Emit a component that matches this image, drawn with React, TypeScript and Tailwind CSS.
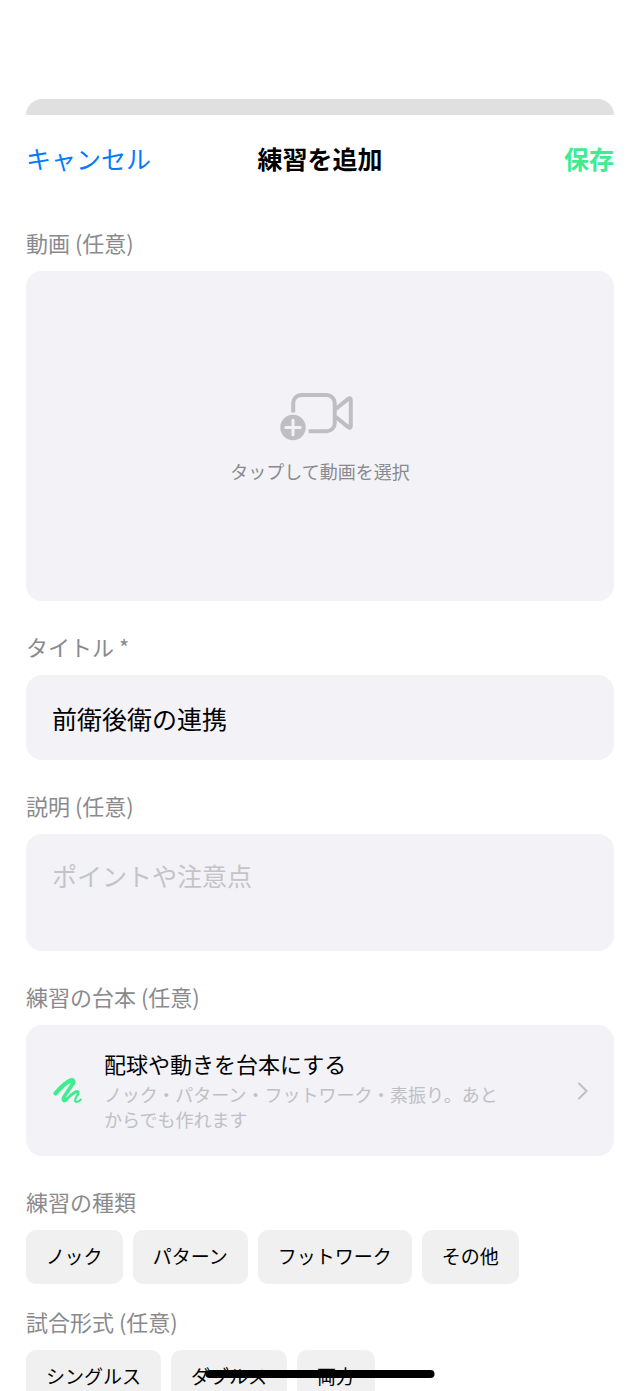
import type { ReactNode } from "react";

const practiceTypes = ["ノック", "パターン", "フットワーク", "その他"];
const matchFormats = ["シングルス", "ダブルス", "両方"];

export default function App() {
  return (
    <div className="relative flex h-screen flex-col overflow-hidden bg-white pt-[99px] font-['Noto_Sans_CJK_JP',sans-serif] text-black">
      <div className="mx-[26px] h-4 shrink-0 rounded-t-2xl bg-[#e0e0e0]" />

      <main className="px-[26px]">
        <header className="grid grid-cols-3 items-center pt-6 pb-7 text-[25px] leading-[38px]">
          <button className="justify-self-start text-[#007aff]">キャンセル</button>
          <h1 className="justify-self-center font-bold">練習を追加</h1>
          <button className="justify-self-end font-bold text-[#3ded8f]">保存</button>
        </header>

        <form className="mt-6 space-y-8">
          <Field label="動画 (任意)">
            <button
              type="button"
              className="flex h-[330px] w-full flex-col items-center justify-center gap-5 rounded-2xl bg-[#f2f2f7]"
            >
              <VideoAddIcon />
              <span className="text-[18px] leading-5 text-[#8a8a8e]">タップして動画を選択</span>
            </button>
          </Field>

          <Field label="タイトル *" htmlFor="title">
            <input
              id="title"
              defaultValue="前衛後衛の連携"
              className="block h-[85px] w-full rounded-2xl bg-[#f2f2f7] px-[26px] text-[25px] outline-none"
            />
          </Field>

          <Field label="説明 (任意)" htmlFor="description">
            <textarea
              id="description"
              placeholder="ポイントや注意点"
              className="block h-[117px] w-full resize-none rounded-2xl bg-[#f2f2f7] px-[26px] py-[22px] text-[25px] leading-[38px] outline-none placeholder:text-[#c4c4c7]"
            />
          </Field>

          <Field label="練習の台本 (任意)">
            <button
              type="button"
              className="flex w-full items-center rounded-2xl bg-[#f2f2f7] px-[26px] py-6 text-left"
            >
              <ScribbleIcon />
              <span className="ml-[22px] flex-1">
                <span className="mb-[5px] block text-[22px] leading-[28px]">配球や動きを台本にする</span>
                <span className="block text-[18px] leading-[25px] text-[#c0c0c4]">
                  ノック・パターン・フットワーク・素振り。あと
                  <br />
                  からでも作れます
                </span>
              </span>
              <ChevronIcon />
            </button>
          </Field>

          <div className="space-y-6">
            <Field label="練習の種類">
              <ChipRow items={practiceTypes} />
            </Field>
            <Field label="試合形式 (任意)">
              <ChipRow items={matchFormats} />
            </Field>
          </div>
        </form>
      </main>

      <div className="absolute bottom-[13px] left-1/2 h-2 w-[229px] -translate-x-1/2 rounded-full bg-black" />
    </div>
  );
}

function Field({ label, htmlFor, children }: { label: string; htmlFor?: string; children: ReactNode }) {
  const labelClass = "mb-4 block text-[22px] leading-[26px] text-[#8a8a8e]";

  return (
    <div>
      {htmlFor ? (
        <label htmlFor={htmlFor} className={labelClass}>
          {label}
        </label>
      ) : (
        <p className={labelClass}>{label}</p>
      )}
      {children}
    </div>
  );
}

function ChipRow({ items }: { items: string[] }) {
  return (
    <div className="flex gap-[10px]">
      {items.map((item) => (
        <button
          key={item}
          type="button"
          className="rounded-[10px] bg-[#f0f0f0] px-5 pt-[11px] pb-[13px] text-[19px] leading-[30px] whitespace-nowrap"
        >
          {item}
        </button>
      ))}
    </div>
  );
}

function VideoAddIcon() {
  return (
    <svg width="80" height="50" viewBox="0 0 80 50" fill="none" aria-hidden="true">
      <g stroke="#bebec3" strokeWidth="4">
        <path d="M13.2 21.5V12a8 8 0 0 1 8-8H46.7a8 8 0 0 1 8 8V32.2a8 8 0 0 1-8 8H28.6" />
        <path d="M55.5 18.3 68.2 7.9Q70.8 6.2 70.8 9.2V34.8Q70.8 37.8 68.2 36.1L55.5 25.7" strokeLinejoin="round" />
      </g>
      <circle cx="13" cy="36.5" r="12.7" fill="#bebec3" />
      <path d="M13 29.3v14.4M5.8 36.5h14.4" stroke="#f2f2f7" strokeWidth="3" strokeLinecap="round" />
    </svg>
  );
}

function ScribbleIcon() {
  return (
    <svg
      width="30"
      height="28"
      viewBox="-1 0 30 28"
      fill="none"
      stroke="#3ded8f"
      strokeLinecap="round"
      strokeLinejoin="round"
      aria-hidden="true"
    >
      <path d="M2.6 16.4C7.5 10.8 13 5.6 17.4 3.6C20 2.7 21 4.2 19.8 6.4" strokeWidth="4.4" />
      <path d="M19.8 6.4C17.6 11 12.8 16.4 10.8 20.4C9.6 23 11 24.4 13.2 22.6" strokeWidth="3.6" />
      <path d="M13.2 22.6C16.4 19.8 20 15.8 23.2 14.6C25.4 14.1 25.8 15.6 24.8 17.4" strokeWidth="2.8" />
      <path d="M24.8 17.4C23.8 19.4 22 21.4 22 23.4C22.2 25.4 25.6 25.2 27.8 22.6" strokeWidth="2.2" />
    </svg>
  );
}

function ChevronIcon() {
  return (
    <svg
      width="10"
      height="18"
      viewBox="0 0 10 18"
      fill="none"
      stroke="#c0c0c4"
      strokeWidth="2"
      strokeLinecap="round"
      strokeLinejoin="round"
      aria-hidden="true"
    >
      <path d="M1 1.5 8.6 9 1 16.5" />
    </svg>
  );
}
